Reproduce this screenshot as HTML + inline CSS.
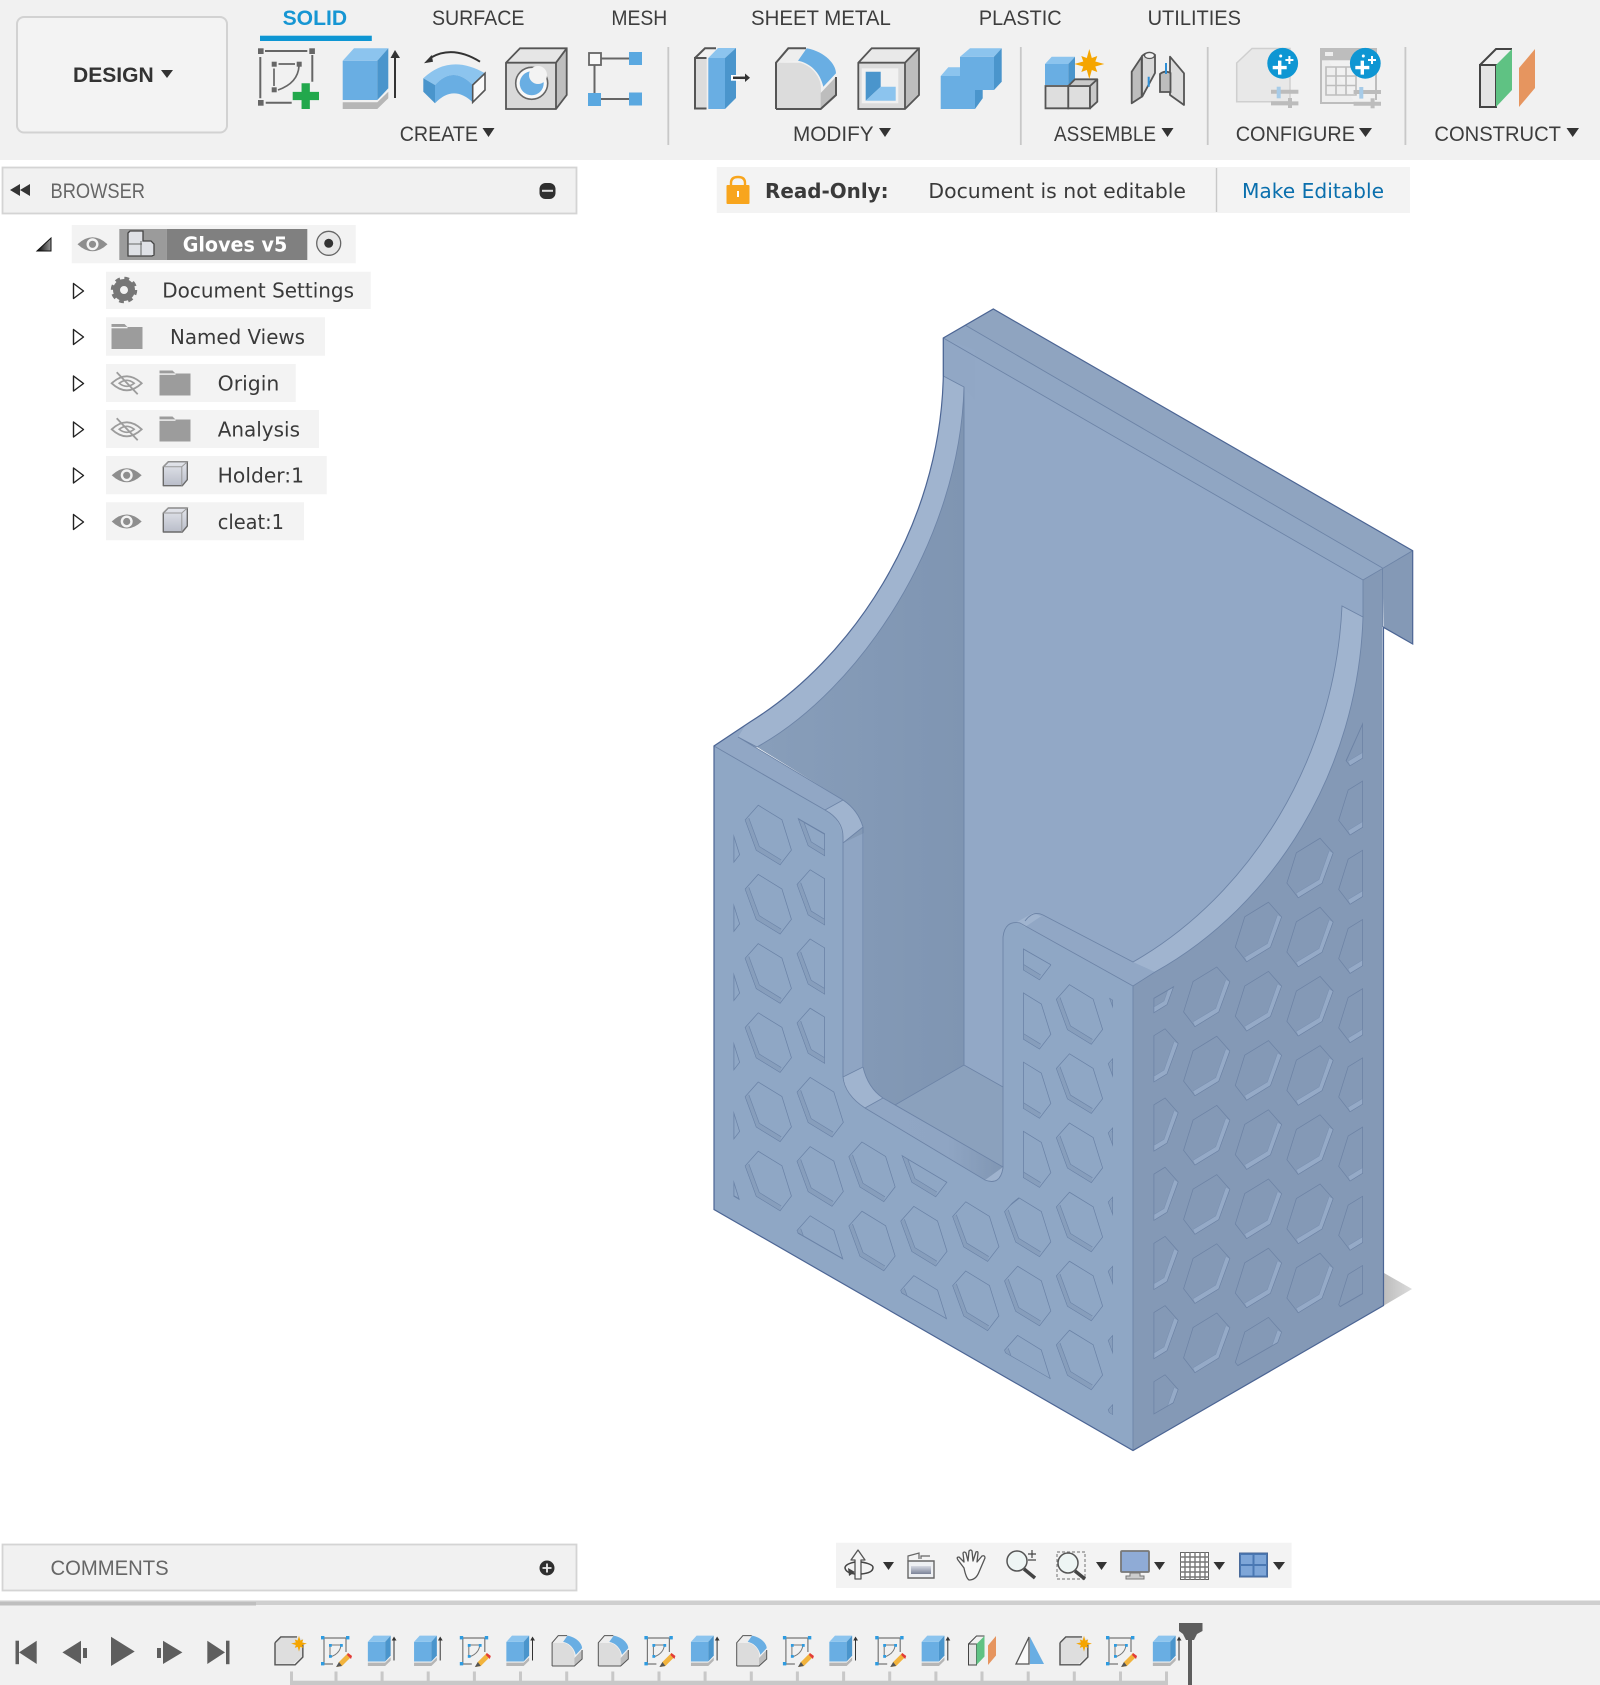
<!DOCTYPE html>
<html><head><meta charset="utf-8"><title>Gloves v5</title>
<style>
html,body{margin:0;padding:0;background:#fff;width:1600px;height:1685px;overflow:hidden}
svg{display:block}
.t{font-family:"Liberation Sans",sans-serif;font-size:21px;fill:#3d3d3d}
.d{font-family:"DejaVu Sans","Liberation Sans",sans-serif;font-size:20px;fill:#3a3a3a}
.b{font-weight:bold}
</style></head><body>
<svg xmlns="http://www.w3.org/2000/svg" width="1600" height="1685" viewBox="0 0 1600 1685">
<defs>
<linearGradient id="wl" x1="0" x2="1" y1="0" y2="0"><stop offset="0" stop-color="#889eba"/><stop offset=".75" stop-color="#8197b4"/><stop offset="1" stop-color="#7f95b2"/></linearGradient>
<linearGradient id="st" x1="0" x2="1" y1="0" y2="0"><stop offset="0" stop-color="#90a6c4"/><stop offset=".6" stop-color="#8fa5c3"/><stop offset="1" stop-color="#8096b3"/></linearGradient>
<linearGradient id="sh" x1="0" x2="1" y1="0" y2="0"><stop offset="0" stop-color="#bdbdbd"/><stop offset="1" stop-color="#dcdcdc"/></linearGradient>
<linearGradient id="tri" x1="0" x2="1" y1="0" y2="0"><stop offset="0" stop-color="#000"/><stop offset="1" stop-color="#999"/></linearGradient>
<linearGradient id="cb" x1="0" x2="0" y1="0" y2="1"><stop offset="0" stop-color="#e4e6ec"/><stop offset="1" stop-color="#b9bdc9"/></linearGradient>
<linearGradient id="cam" x1="0" x2="0" y1="0" y2="1"><stop offset="0" stop-color="#d5d8e2"/><stop offset="1" stop-color="#7b8398"/></linearGradient>
<clipPath id="fc"><polygon points="733.5,781 825,833.5 825,1072 850,1085 850,1120 901.7,1155 946.7,1181.7 1003,1210 1023,1194 1023,948.3 1113,1000 1113,1415 733.5,1196.5"/></clipPath>
<clipPath id="fc2"><polygon points="734.3,782.5 824.2,834.5 824.2,1073 849.2,1086 849.2,1120.5 901.7,1156 946.7,1182.7 1003.5,1211.2 1023.8,1195 1023.8,949.8 1112.2,1000.2 1112.2,1414 734.3,1195.5"/></clipPath>
<clipPath id="rc"><polygon points="1153.5,998 1205,968 1238,910 1262,893 1290,845 1325,830 1345,762 1363,722 1363,1294 1153.5,1414.6"/></clipPath>
<clipPath id="rc2"><polygon points="1154.3,998.6 1205.4,969 1238.5,911 1262.5,894 1290.5,846 1325.7,831 1345.7,763 1362.2,726 1362.2,1293.3 1154.3,1413.2"/></clipPath>
<g id="f"><polygon points="-10,-29.3 13.3,-15 22.7,15 11.7,29.3 -11.7,15 -22.7,-15"/><polygon points="-22.7,-15 -11.7,15 11.7,29.3 13,25 -9,11.5 -19.5,-17" style="fill:var(--w);stroke:none"/><polyline points="-19.5,-17 -9,11.5 13,25" style="fill:none;stroke:var(--l);stroke-width:.7"/></g>
<g id="r"><polygon points="10,-29.3 -13.3,-15 -22.7,15 -11.7,29.3 11.7,15 22.7,-15"/><polygon points="22.7,-15 11.7,15 -11.7,29.3 -13.5,25 9,11.5 19,-17" style="fill:var(--w);stroke:none"/><polyline points="19,-17 9,11.5 -13.5,25" style="fill:none;stroke:var(--l);stroke-width:.6"/></g>
<g id="fg">
<use href="#f" x="716.5" y="839.6"/><use href="#f" x="716.5" y="908.8"/><use href="#f" x="716.5" y="978"/><use href="#f" x="716.5" y="1047.2"/><use href="#f" x="716.5" y="1116.4"/><use href="#f" x="716.5" y="1185.6"/>
<use href="#f" x="768.3" y="835"/><use href="#f" x="768.3" y="904.2"/><use href="#f" x="768.3" y="973.4"/><use href="#f" x="768.3" y="1042.6"/><use href="#f" x="768.3" y="1111.8"/><use href="#f" x="768.3" y="1181"/>
<use href="#f" x="820.2" y="830.4"/><use href="#f" x="820.2" y="899.6"/><use href="#f" x="820.2" y="968.8"/><use href="#f" x="820.2" y="1038"/><use href="#f" x="820.2" y="1107.2"/><use href="#f" x="820.2" y="1176.4"/><use href="#f" x="820.2" y="1245.6"/>
<use href="#f" x="872" y="1171.8"/><use href="#f" x="872" y="1241"/>
<use href="#f" x="923.9" y="1167"/><use href="#f" x="923.9" y="1236.2"/><use href="#f" x="923.9" y="1305.4"/>
<use href="#f" x="975.8" y="1231.6"/><use href="#f" x="975.8" y="1300.8"/>
<use href="#f" x="1027.7" y="950"/><use href="#f" x="1027.7" y="1019.2"/><use href="#f" x="1027.7" y="1088.4"/><use href="#f" x="1027.7" y="1157.6"/><use href="#f" x="1027.7" y="1226.8"/><use href="#f" x="1027.7" y="1296"/><use href="#f" x="1027.7" y="1365.2"/>
<use href="#f" x="1079.5" y="1014.4"/><use href="#f" x="1079.5" y="1083.6"/><use href="#f" x="1079.5" y="1152.8"/><use href="#f" x="1079.5" y="1222"/><use href="#f" x="1079.5" y="1291"/><use href="#f" x="1079.5" y="1360"/>
<use href="#f" x="1131.4" y="1009.6"/><use href="#f" x="1131.4" y="1078.8"/><use href="#f" x="1131.4" y="1148"/><use href="#f" x="1131.4" y="1217.2"/><use href="#f" x="1131.4" y="1286.4"/><use href="#f" x="1131.4" y="1355.6"/><use href="#f" x="1131.4" y="1424.8"/>
</g>
<g id="rg">
<use href="#r" x="1155" y="989.4"/><use href="#r" x="1155" y="1058.6"/><use href="#r" x="1155" y="1127.8"/><use href="#r" x="1155" y="1197"/><use href="#r" x="1155" y="1266.2"/><use href="#r" x="1155" y="1335.4"/><use href="#r" x="1155" y="1404.6"/>
<use href="#r" x="1206.7" y="996.8"/><use href="#r" x="1206.7" y="1066"/><use href="#r" x="1206.7" y="1135.2"/><use href="#r" x="1206.7" y="1204.4"/><use href="#r" x="1206.7" y="1273.6"/><use href="#r" x="1206.7" y="1342.8"/>
<use href="#r" x="1258.4" y="932"/><use href="#r" x="1258.4" y="1001.2"/><use href="#r" x="1258.4" y="1070.4"/><use href="#r" x="1258.4" y="1139.6"/><use href="#r" x="1258.4" y="1208.8"/><use href="#r" x="1258.4" y="1278"/><use href="#r" x="1258.4" y="1347.2"/>
<use href="#r" x="1310" y="868"/><use href="#r" x="1310" y="937"/><use href="#r" x="1310" y="1006.2"/><use href="#r" x="1310" y="1075.4"/><use href="#r" x="1310" y="1144.6"/><use href="#r" x="1310" y="1213.8"/><use href="#r" x="1310" y="1283"/>
<use href="#r" x="1361.8" y="736"/><use href="#r" x="1361.8" y="805.2"/><use href="#r" x="1361.8" y="874.4"/><use href="#r" x="1361.8" y="943.6"/><use href="#r" x="1361.8" y="1012.8"/><use href="#r" x="1361.8" y="1082"/><use href="#r" x="1361.8" y="1151.2"/><use href="#r" x="1361.8" y="1220.4"/><use href="#r" x="1361.8" y="1289.6"/>
</g>
<g id="ext"><polygon points=".7,12.7 35.3,12.7 35.3,52 .7,52" fill="#69aee3"/><polygon points=".7,12.7 12,.3 46.3,.3 35.3,12.7" fill="#8cc4ee"/><polygon points="35.3,12.7 46.3,.3 46.3,40.3 35.3,52" fill="#4a95cc"/><polygon points=".7,54.3 35.3,54.3 46.3,43.7 46.3,50.3 35.3,61 .7,61" fill="#b6b6b6"/><path d="M53,9V50" stroke="#333" stroke-width="2"/><polygon points="48.5,10 53,2 58,10" fill="#333"/></g>
<g id="fil"><path d="M1,61V14.7H25C35,17 45,27 46,39V61Z" fill="#dcdcdc"/><path d="M45.7,45L61,28.7V47L45.7,61Z" fill="#bdbdbd"/><path d="M1,14.7L13.3,.3H31L23,12.7Z" fill="#eeeeee"/><path d="M23,12.7L31.7,.3C51,4 61,17 61,25.3L48.3,38.7C45,24 35,15 23,12.7Z" fill="#69aee3"/><path d="M1,61V14.7L13.3,.3H31M1,61H45.7L61,47V29" fill="none" stroke="#555" stroke-width="2"/></g>
<polygon id="star" points="0,-15 2.5,-6 8,-8 6,-2.5 15,0 6,2.5 8,8 2.5,6 0,15 -2.5,6 -8,8 -6,2.5 -15,0 -6,-2.5 -8,-8 -2.5,-6" fill="#f5a500"/>
<g id="comp"><polygon points="0,14 14,0 58,6 58,42 38,58 0,58" fill="#dedede"/><path d="M0,14L12,2H46M58,18V44L42,60H0V14" fill="none" stroke="#555" stroke-width="3"/><use href="#star" transform="translate(50,16) scale(1.1)"/></g>
<g id="plane"><polygon points="1,17 17,17 17,59 1,59" fill="#e4e4e4" stroke="#444" stroke-width="2"/><path d="M1,17L17,1H33" fill="none" stroke="#444" stroke-width="2"/><polygon points="17,17 33,1 33,42 17,59" fill="#5fc283"/><polygon points="40,20 56,1 56,40 40,59" fill="#e6955f"/></g>
<g id="sk"><path d="M3,2H25M3,2V28M3,28H12M25,2V16" stroke="#777" stroke-width="1.2" fill="none"/><path d="M9,9H20M9,9V21M20,9Q19,18 9,21" stroke="#777" stroke-width="1" fill="none"/><g fill="#2e9be0"><rect x="0" y="0" width="3.4" height="3.4"/><rect x="25" y="0" width="3.4" height="3.4"/><rect x="0" y="26" width="3.4" height="3.4"/><rect x="8" y="8" width="2.8" height="2.8"/><rect x="19" y="8" width="2.8" height="2.8"/><rect x="8" y="19" width="2.8" height="2.8"/></g><polygon points="27,17 31,20 21,30 16,31 18,26" fill="#f2b33c"/><polygon points="27,17 31,20 30,23 26,19" fill="#e23b3b"/><polygon points="18,26 21,30 15,31" fill="#555"/></g>
<g id="eye"><path d="M-15,0Q0,-14 15,0Q0,14 -15,0Z" fill="#8e8e8e"/><circle r="6" fill="#f3f3f3"/><circle r="3.6" fill="#8e8e8e"/></g>
<g id="eyex"><path d="M-15,0Q0,-14 15,0Q0,14 -15,0Z" fill="none" stroke="#9c9c9c" stroke-width="1.8"/><path d="M-7.5,0Q0,-6 7.5,0Q0,6 -7.5,0Z" fill="none" stroke="#9c9c9c" stroke-width="1.6"/><path d="M-10,-11L11,11" stroke="#9c9c9c" stroke-width="1.8"/></g>
<g id="fold"><path d="M0,0H13L16,3H31V25H0Z" fill="#9c9c9c"/><path d="M0,3.6H16" stroke="#f3f3f3" stroke-width="1.4"/></g>
<g id="cube"><path d="M1,6L6,1H25V19L20,25H1Z" fill="url(#cb)" stroke="#6a6a6a" stroke-width="1.4" stroke-linejoin="round"/><path d="M6,1L25,1L19.5,6H1ZM19.5,6V25" fill="none" stroke="#9a9a9a" stroke-width="1"/></g>
<path id="tw" d="M1,1L11,8.5L1,16Z" fill="#fff" stroke="#222" stroke-width="1.4" stroke-linejoin="round"/>
<g id="cfgs"><path d="M-13.7,0H13.7M-13.7,11.7H13.7" stroke="#bcbcbc" stroke-width="4"/><path d="M5.3,6.3V16.3" stroke="#bcbcbc" stroke-width="4"/><path d="M-6,-5V6.6" stroke="#a6cbe8" stroke-width="4"/></g>
<g id="plus"><circle r="15.4" fill="#0e96d3"/><path d="M-10,4.3H4M-3,-2.7V11.3" stroke="#fff" stroke-width="3.4"/><path d="M2.7,-3.3H10.700M6.700,-7.3V.7" stroke="#fff" stroke-width="2"/><circle cx="-2" cy="-7.3" r="1.5" fill="#fff"/></g>
</defs>

<!-- toolbar -->
<rect width="1600" height="160" fill="#f1f1f1"/>
<rect x="17" y="17" width="210" height="115.5" rx="7" fill="#f3f3f3" stroke="#d2d2d2" stroke-width="2"/>
<text class="t b" x="73" y="82" textLength="80.7" lengthAdjust="spacingAndGlyphs" style="fill:#333">DESIGN</text>
<polygon points="161,70 173,70 167,78" fill="#333"/>
<text class="t" x="282.6" y="25" textLength="64.5" lengthAdjust="spacingAndGlyphs" style="fill:#1696d3;font-weight:bold">SOLID</text>
<text class="t" x="432" y="25" textLength="92.4" lengthAdjust="spacingAndGlyphs">SURFACE</text>
<text class="t" x="611.4" y="25" textLength="55.9" lengthAdjust="spacingAndGlyphs">MESH</text>
<text class="t" x="751" y="25" textLength="139.8" lengthAdjust="spacingAndGlyphs">SHEET METAL</text>
<text class="t" x="978.9" y="25" textLength="82.7" lengthAdjust="spacingAndGlyphs">PLASTIC</text>
<text class="t" x="1147.6" y="25" textLength="93.4" lengthAdjust="spacingAndGlyphs">UTILITIES</text>
<rect x="260" y="35.7" width="111.8" height="5.3" fill="#0e96d3"/>
<text class="t" x="399.7" y="141" textLength="78.3" lengthAdjust="spacingAndGlyphs">CREATE</text><polygon points="482.5,128 494.5,128 488.5,137" fill="#333"/>
<text class="t" x="793" y="141" textLength="80.6" lengthAdjust="spacingAndGlyphs">MODIFY</text><polygon points="879,128 891,128 885,137" fill="#333"/>
<text class="t" x="1054" y="141" textLength="102" lengthAdjust="spacingAndGlyphs">ASSEMBLE</text><polygon points="1161.5,128 1173.5,128 1167.5,137" fill="#333"/>
<text class="t" x="1235.7" y="141" textLength="119.3" lengthAdjust="spacingAndGlyphs">CONFIGURE</text><polygon points="1359,128 1372,128 1365.5,137" fill="#333"/>
<text class="t" x="1434.4" y="141" textLength="126.6" lengthAdjust="spacingAndGlyphs">CONSTRUCT</text><polygon points="1566.5,128 1579,128 1572.7,137" fill="#333"/>
<path d="M668.3,47V145M1020.8,47V145M1207.7,47V145M1405.4,47V145" stroke="#c8c8c8" stroke-width="1.8"/>

<!-- sketch -->
<g transform="translate(258,48)">
<path d="M7,3H49.3M2.3,9V50.3M7.7,54.7H33.7M54.3,7V33.7" stroke="#666" stroke-width="2" fill="none"/>
<path d="M20.5,16H37M16,20.5V38M41,18Q40,35 20,42" stroke="#666" stroke-width="1.7" fill="none"/>
<g fill="#666"><rect x="0" y=".3" width="5.6" height="5.7"/><rect x="51.3" y=".3" width="5.6" height="5.7"/><rect x="0" y="52" width="5.6" height="5.7"/><rect x="13.7" y="13.7" width="5" height="5"/><rect x="38.7" y="13.7" width="5" height="5"/><rect x="13.7" y="39.3" width="5" height="5"/></g>
<path d="M47.7,35.3V61M34.7,48H61" stroke="#22a84c" stroke-width="8.3"/>
</g>
<use href="#ext" transform="translate(342,48)"/>
<!-- revolve -->
<path d="M480,61.7Q453,45 431,57.5" fill="none" stroke="#333" stroke-width="2"/><polygon points="424,63.3 431.7,55 433,61.7" fill="#333"/>
<path d="M423.3,78.3Q450,53.3 485,73.3L472.7,85Q453.3,65 435,85Z" fill="#8cc4ee"/>
<path d="M435,85Q453.3,65 472.7,85V102.3Q453.3,84 435,103.3Z" fill="#69aee3"/>
<path d="M423.3,78.3L435,85V103.3L423.3,91.7Z" fill="#4a95cc"/>
<path d="M472.7,85L485,73.3V90L472.7,102.3Z" fill="#fafafa" stroke="#555" stroke-width="1.6"/>
<!-- hole -->
<g>
<polygon points="506,62.7 556,62.7 556,109 506,109" fill="#d9d9d9"/><polygon points="506,62.7 520,48.3 566.7,48.3 556,62.7" fill="#e6e6e6"/><polygon points="556,62.7 566.7,48.3 566.7,95 556,109" fill="#bfbfbf"/>
<path d="M506,62.7L520,48.3H566.7V95L556,109H506ZM506,62.7H556L566.7,48.3M556,62.7V109" fill="none" stroke="#555" stroke-width="1.8"/>
<circle cx="531.7" cy="83.3" r="16" fill="#f8f8f8" stroke="#666" stroke-width="1.6"/>
<circle cx="531.7" cy="83.3" r="12" fill="#69aee3"/>
<circle cx="538" cy="75" r="9" fill="#f3f3f3"/>
</g>
<!-- pattern -->
<g><path d="M601,58.5H629M594.5,65V93M601,99H629" stroke="#666" stroke-width="2"/><rect x="589" y="53" width="12" height="12" fill="#f8f8f8" stroke="#666" stroke-width="1.8"/><rect x="629" y="52" width="13" height="13" fill="#5aa8e0"/><rect x="588" y="93" width="13" height="13" fill="#5aa8e0"/><rect x="629" y="92.5" width="13" height="13" fill="#5aa8e0"/></g>
<!-- press pull -->
<g><polygon points="695,58 706.7,58 706.7,109 695,109" fill="#dcdcdc"/><path d="M706.500,58H695V108.500H706.500M695,58L705,48.300H716" fill="none" stroke="#555" stroke-width="2"/><polygon points="708.300,58 725,58 725,109 708.300,109" fill="#69aee3"/><polygon points="708.300,58 718,48 736,48 725,58" fill="#8cc4ee"/><polygon points="725,58 736,48 736,98 725,109" fill="#4a95cc"/><rect x="731" y="75" width="9" height="5.700" fill="#fff"/><path d="M733,77.800H746" stroke="#333" stroke-width="2.500"/><polygon points="745,73.500 750,77.800 745,82" fill="#333"/></g>
<use href="#fil" transform="translate(775,48)"/>
<!-- shell -->
<g>
<polygon points="858.300,62.700 905,62.700 905,109 858.300,109" fill="#dcdcdc"/><polygon points="858.300,62.700 871.700,48.300 919,48.300 905,62.700" fill="#e9e9e9"/><polygon points="905,62.700 919,48.300 919,95 905,109" fill="#bdbdbd"/>
<path d="M858.300,62.700L871.700,48.300H919V95L905,109H858.300ZM858.300,62.700H905L919,48.300M905,62.700V109" fill="none" stroke="#555" stroke-width="1.800"/>
<rect x="861.700" y="68.300" width="36.600" height="35" fill="#f1f1f1"/><polygon points="865.700,71.700 880.700,71.700 880.700,86.700 865.700,100.700" fill="#4a95cc"/><polygon points="880.700,86.700 895.700,86.700 895.700,100.700 865.700,100.700" fill="#8cc4ee"/>
</g>
<!-- combine -->
<g><path d="M940.700,76H960V56.700H994V90H975V109H940.700Z" fill="#69aee3"/><polygon points="960,56.700 970,48.300 1001.700,48.300 994,56.700" fill="#8cc4ee"/><polygon points="940.700,76 948.300,67.300 960,67.300 960,76" fill="#8cc4ee"/><polygon points="994,56.700 1001.700,48.300 1001.700,81.700 994,90" fill="#4a95cc"/><polygon points="975,90 982.700,90 982.700,98.300 975,109" fill="#4a95cc"/></g>
<!-- assemble -->
<g><polygon points="1045,64 1068.300,64 1068.300,85 1045,85" fill="#69aee3"/><polygon points="1045,64 1051.700,56.700 1075,56.700 1068.300,64" fill="#8cc4ee"/><polygon points="1068.300,64 1075,56.700 1075,78.300 1068.300,85" fill="#4a95cc"/>
<path d="M1045.500,86H1068.300V108.300H1045.500Z" fill="#dedede" stroke="#555" stroke-width="1.800"/><path d="M1068.300,86H1090V108.300H1068.300Z" fill="#dedede" stroke="#555" stroke-width="1.800"/><path d="M1068.300,86L1075,79.300H1097.300L1090,86ZM1090,86L1097.300,79.300V101.700L1090,108.300Z" fill="#c9c9c9" stroke="#555" stroke-width="1.800" stroke-linejoin="round"/>
<use href="#star" transform="translate(1089.300,64)"/></g>
<!-- joint -->
<g><path d="M1131.700,71.700L1141.700,56.700V96.700L1131.700,103.300Z" fill="#bdbdbd" stroke="#555" stroke-width="1.800" stroke-linejoin="round"/><path d="M1142,56Q1149,50 1155,55V73L1142,97Z" fill="#d9d9d9" stroke="#555" stroke-width="1.800"/><ellipse cx="1149.500" cy="55.500" rx="5" ry="3" fill="#f3f3f3" stroke="#555" stroke-width="1.200"/><path d="M1170,56.700L1184,73.300V105L1170,95Z" fill="#dcdcdc" stroke="#555" stroke-width="1.800" stroke-linejoin="round"/><path d="M1160,74Q1165,70 1170.500,73V92H1160Z" fill="#bdbdbd" stroke="#555" stroke-width="1.800"/><path d="M1166,63V74M1148.700,76.700V86.700" stroke="#2e8fd6" stroke-width="2"/></g>
<!-- configure -->
<g><path d="M1236.700,63L1252,48.500H1290V101.700H1236.700Z" fill="#e8e8e8" stroke="#cfcfcf" stroke-width="1.500"/><use href="#plus" transform="translate(1282.700,63.300)"/><use href="#cfgs" transform="translate(1284.700,91.700)"/>
<path d="M1320,49H1376V100" fill="none" stroke="#bdbdbd" stroke-width="2"/><path d="M1321,48.500V103H1355" fill="#eee" stroke="#bdbdbd" stroke-width="2"/><rect x="1320" y="48.300" width="57" height="12" fill="#bdbdbd"/><rect x="1325" y="52" width="8" height="4" fill="#eee"/><path d="M1326,67H1356V95H1326ZM1326,76H1356M1326,85.500H1356M1336,67V95M1346,67V95" fill="none" stroke="#bdbdbd" stroke-width="1.600"/><use href="#plus" transform="translate(1365.300,63.300)"/><use href="#cfgs" transform="translate(1367.300,92)"/></g>
<use href="#plane" transform="translate(1479,48)"/>

<!-- browser panel -->
<rect x="2.500" y="167.500" width="574" height="46" fill="#f1f1f1" stroke="#d4d4d4" stroke-width="1.800"/>
<path d="M10,190L20,184V196ZM20,190L30,184V196Z" fill="#333"/>
<text class="t" x="50.500" y="198" textLength="94.500" lengthAdjust="spacingAndGlyphs" style="fill:#666">BROWSER</text>
<rect x="539.500" y="183" width="16" height="16" rx="6" fill="#2f2f2f"/><rect x="542" y="189.800" width="11" height="2" fill="#ddd"/>

<!-- read-only -->
<rect x="716.700" y="167" width="693.300" height="46" fill="#f3f3f3"/>
<path d="M731,186V183Q731,177 738,177Q745,177 745,183V186" fill="none" stroke="#f8a51d" stroke-width="2.400"/><rect x="726.500" y="185" width="23" height="19" rx="1" fill="#f8a51d"/><rect x="737" y="191" width="2" height="6" fill="#fff"/>
<text class="d b" x="765" y="198" textLength="123.600" lengthAdjust="spacingAndGlyphs">Read-Only:</text>
<text class="d" x="928.400" y="198" textLength="257.600" lengthAdjust="spacingAndGlyphs">Document is not editable</text>
<path d="M1216.500,168V212" stroke="#c8c8c8" stroke-width="1.400"/>
<text class="d" x="1242" y="198" textLength="142" lengthAdjust="spacingAndGlyphs" style="fill:#0a6fad">Make Editable</text>

<!-- tree -->
<rect x="71.700" y="225" width="284" height="38.300" fill="#f3f3f3"/>
<polygon points="37,251 51,238 51,251" fill="url(#tri)" stroke="#111" stroke-width="1"/>
<use href="#eye" transform="translate(92.500,244.300)"/>
<rect x="119.300" y="229" width="47.400" height="31" fill="#9b9b9b"/><rect x="166.700" y="229" width="140.600" height="31" fill="#808080"/>
<path d="M128,233L130,231H143V241H151L154,244V255L152,256H128Z" fill="#dfe1e6" stroke="#444" stroke-width="1.300"/><path d="M128,244H142M141,241V256" stroke="#666" stroke-width="1" fill="none"/>
<text class="d b" x="182.700" y="251.700" textLength="104.600" lengthAdjust="spacingAndGlyphs" style="fill:#fff">Gloves v5</text>
<circle cx="328.700" cy="243.300" r="12" fill="#e8e8e8" stroke="#666" stroke-width="1.300"/><circle cx="328.700" cy="243.300" r="4.500" fill="#333"/>

<g fill="#f3f3f3"><rect x="106" y="271.700" width="264.700" height="37.300"/><rect x="106" y="317.300" width="219" height="38.400"/><rect x="106" y="364" width="189.700" height="38"/><rect x="106" y="410" width="213" height="38"/><rect x="106" y="456" width="220.700" height="38.300"/><rect x="106" y="502.300" width="198" height="38"/></g>
<use href="#tw" transform="translate(72.500,282.500)"/><use href="#tw" transform="translate(72.500,328.500)"/><use href="#tw" transform="translate(72.500,375)"/><use href="#tw" transform="translate(72.500,421)"/><use href="#tw" transform="translate(72.500,467)"/><use href="#tw" transform="translate(72.500,513.500)"/>
<g transform="translate(124,290)"><circle r="7.500" fill="none" stroke="#777" stroke-width="7"/><circle r="11" fill="none" stroke="#777" stroke-width="4.500" stroke-dasharray="4.500 4.140"/></g>
<text class="d" x="162.300" y="297.600" textLength="191.700" lengthAdjust="spacingAndGlyphs">Document Settings</text>
<use href="#fold" transform="translate(111.500,324)"/>
<text class="d" x="170" y="344" textLength="135" lengthAdjust="spacingAndGlyphs">Named Views</text>
<use href="#eyex" transform="translate(126.700,383.300)"/><use href="#fold" transform="translate(159.500,370.500)"/>
<text class="d" x="217.700" y="390.300" textLength="61.600" lengthAdjust="spacingAndGlyphs">Origin</text>
<use href="#eyex" transform="translate(126.700,429.300)"/><use href="#fold" transform="translate(159.500,416.500)"/>
<text class="d" x="217.700" y="436.600" textLength="82.300" lengthAdjust="spacingAndGlyphs">Analysis</text>
<use href="#eye" transform="translate(126.700,475.300)"/><use href="#cube" transform="translate(162.300,460.700)"/>
<text class="d" x="217.700" y="482.700" textLength="86.300" lengthAdjust="spacingAndGlyphs">Holder:1</text>
<use href="#eye" transform="translate(126.700,521.500)"/><use href="#cube" transform="translate(162.300,507)"/>
<text class="d" x="217.700" y="529" textLength="66.300" lengthAdjust="spacingAndGlyphs">cleat:1</text>

<!-- model -->
<polygon points="1384,1273 1412,1289 1384,1305.500" fill="url(#sh)"/>
<path d="M943.300,338L1363,580V1100H964V387Z" fill="#92a8c6"/>
<path d="M943.300,338L993.300,309L1412.700,550.700L1382.500,568L1363,580Z" fill="#90a6c3"/>
<path d="M965,325L993.300,309L1412.700,550.700L1382.500,568Z" fill="#8fa4c0"/>
<path d="M757,747C860,690 960,540 964,387V1065L895,1105L843,1075V800Z" fill="url(#wl)"/>
<path d="M895,1105L964,1065L1003,1087V1170L985,1180Z" fill="#8ba1bd"/>
<path d="M985,1180L1003,1167V1190H985Z" fill="#9fb3ce"/>
<!-- left arc band -->
<path d="M714,746L750,722C850,660 940,530 943.300,376L964,387C960,540 860,690 757,747Z" fill="#a0b4cf"/>
<path d="M943.300,338V376L964,387L975,400V350Z" fill="#91a7c5"/>
<path d="M714,746L745,726L738,737L755,747L843,800L825,810Z" fill="#91a7c5"/>
<!-- slot inner -->
<path d="M843,837V1077L864,1067V833L843,843Z" fill="#8fa5c3"/>
<path d="M865,1108L883,1098L1003,1167L985,1180Z" fill="url(#st)"/>
<!-- front face -->
<path d="M714,746L825,810Q843,820 843,837V1077Q845,1095 865,1108L985,1180Q1000,1186 1003,1168V937Q1005,920 1020,923L1133,986V1450.500L714,1209.500Z" fill="#8fa7c5"/>
<path d="M825,810L843,800Q858,810 863,827L843,843Q843,820 825,810Z" fill="#a0b4cf"/>
<path d="M843,1077L863,1067Q868,1088 883,1098L865,1108Q847,1097 843,1077Z" fill="#a0b4cf"/>
<path d="M1015,923L1033,913L1043,917L1025,927Q1020,923 1015,923Z" fill="#a0b4cf"/>
<path d="M1025,927L1043,915L1133,962L1155,972L1133,986Z" fill="#91a7c5"/>
<!-- right face -->
<path d="M1133,986L1155,972C1275,905 1358,770 1363,617V580L1382.500,568L1383.500,1305.500L1133,1450.500Z" fill="#8499b6"/>
<path d="M1133,962C1250,895 1335,760 1342,606L1363,617C1358,770 1275,905 1155,972Z" fill="#a0b4cf"/>
<polygon points="1382.500,568 1412.700,550.700 1412.700,644 1383.500,627.300" fill="#8499b6"/>
<!-- model lines -->
<g fill="none" stroke="#6d84a7" stroke-width=".9">
<path d="M943.300,338L1363,580L1412.700,550.700M965,325L1382.500,568M1363,580V617L1342,606C1335,760 1250,895 1133,962L1043,915Q1033,910 1025,921M1133,986V1450.500M1382.500,568V627"/>
<path d="M943.300,338V376L964,387V1065L895,1105M964,1065L1003,1087"/>
<path d="M964,387C960,540 860,690 757,747L738,737L843,800Q858,810 863,827V1067Q868,1088 883,1098L1003,1167"/>
<path d="M714,746L825,810Q843,820 843,837V1077Q845,1095 865,1108L985,1180Q1000,1186 1003,1168V937Q1005,920 1020,923L1133,986"/>
<path d="M825,810L843,800M843,843L863,827M843,1077L863,1067M865,1108L883,1098M1363,617C1358,770 1275,905 1155,972L1133,986"/>
</g>
<path d="M714,746V1209.500L1133,1450.500L1383.500,1305.500V627.300L1412.700,644V550.700L993.300,309L943.300,338V376C940,530 850,660 750,722Z" fill="none" stroke="#4c6594" stroke-width="1.200"/>

<!-- pockets: outline layer, then face-coloured interior -->
<g clip-path="url(#fc)"><use href="#fg" fill="#6b83a7" stroke="#6b83a7" stroke-width="1.500" style="--w:none;--l:none"/></g>
<g clip-path="url(#fc2)"><use href="#fg" fill="#8fa7c5" stroke="none" style="--w:#879ebc;--l:#6f87aa"/></g>
<g clip-path="url(#rc)"><use href="#rg" fill="#6d83a5" stroke="#6d83a5" stroke-width="1.500" style="--w:none;--l:none"/></g>
<g clip-path="url(#rc2)"><use href="#rg" fill="#8499b6" stroke="none" style="--w:#95aac7;--l:#7b91b1"/></g>

<!-- comments -->
<rect x="2.500" y="1544.500" width="574" height="46" fill="#f1f1f1" stroke="#d4d4d4" stroke-width="1.800"/>
<text class="t" x="50.500" y="1575" textLength="118.200" lengthAdjust="spacingAndGlyphs" style="fill:#666">COMMENTS</text>
<circle cx="547" cy="1568" r="7.500" fill="#2f2f2f"/><path d="M542.500,1568H551.500M547,1563.500V1572.500" stroke="#eee" stroke-width="1.800"/>

<!-- nav bar -->
<rect x="836" y="1542.700" width="455.600" height="45.300" fill="#f3f3f3"/>
<g fill="#333">
<polygon points="883,1562 894,1562 888.500,1570"/><polygon points="1096,1562 1107,1562 1101.500,1570"/><polygon points="1154,1562 1165,1562 1159.500,1570"/><polygon points="1213.500,1562 1225,1562 1219.300,1570"/><polygon points="1273,1562 1285,1562 1279,1570"/>
</g>
<g>
<path d="M858,1550L865,1560H861V1579H855V1560H851Z" fill="#f4f4f4" stroke="#555" stroke-width="1.300" stroke-linejoin="round"/>
<path d="M855,1562Q845,1564 845,1568Q846,1573 855,1574M861,1574Q873,1573 873,1567.500Q873,1564 861,1562" fill="none" stroke="#444" stroke-width="1.500"/><polygon points="848,1568 855,1572 849,1576" fill="#444"/>
<path d="M908,1561H934V1578H908Z" fill="#eef0f3" stroke="#666" stroke-width="1.400"/><rect x="911" y="1566" width="20" height="8" fill="url(#cam)"/><path d="M908,1561V1556L919,1553V1559M921,1559V1556L930,1556" fill="none" stroke="#666" stroke-width="1.200"/>
<path d="M964,1568L958,1560Q956,1557 959,1557L964,1562L963,1553Q964,1551 966,1553L968,1561L969,1551Q971,1549 972,1551L973,1561L976,1552Q978,1551 978,1553L977,1562L982,1556Q985,1555 985,1558L979,1572Q976,1580 969,1580Q966,1578 964,1568Z" fill="#f8f8f8" stroke="#555" stroke-width="1.300" stroke-linejoin="round"/>
<circle cx="1017" cy="1561" r="10" fill="#eef5f4" stroke="#555" stroke-width="1.500"/><path d="M1024,1569L1035,1578" stroke="#444" stroke-width="3.500"/><path d="M1028,1554H1036M1032,1550V1558M1028,1560H1036" stroke="#444" stroke-width="1.200"/>
<rect x="1057" y="1552" width="28" height="27" fill="none" stroke="#888" stroke-width="1.200" stroke-dasharray="3 2"/><circle cx="1068" cy="1563" r="10" fill="#eef5f4" stroke="#555" stroke-width="1.500"/><path d="M1075,1571L1085,1579" stroke="#444" stroke-width="3.500"/>
<rect x="1121" y="1551" width="28" height="21" rx="1" fill="#8fabd6" stroke="#777" stroke-width="1.800"/><path d="M1130,1573H1140V1576H1144V1579H1126V1576H1130Z" fill="#ccc" stroke="#777"/>
<rect x="1180.500" y="1552.500" width="28" height="27" fill="#fff" stroke="#666" stroke-width="1"/><path d="M1185,1552V1580M1190,1552V1580M1195,1552V1580M1200,1552V1580M1205,1552V1580M1180,1557H1209M1180,1562H1209M1180,1567H1209M1180,1572H1209M1180,1577H1209" stroke="#777" stroke-width="1.400"/>
<rect x="1239.500" y="1553" width="28" height="24" fill="#4a78b3" stroke="#4a6a9a"/><g fill="#7ea6d8"><rect x="1241" y="1555" width="11.500" height="9"/><rect x="1254.500" y="1555" width="11.500" height="9"/><rect x="1241" y="1566" width="11.500" height="9.500"/><rect x="1254.500" y="1566" width="11.500" height="9.500"/></g>
</g>

<!-- timeline -->
<rect x="0" y="1604" width="1600" height="81" fill="#f1f1f1"/>
<rect x="0" y="1600.500" width="1600" height="4.500" fill="#cfcfcf"/><rect x="0" y="1602" width="256" height="3.500" fill="#bfbfbf"/>
<g fill="#5e5e5e">
<rect x="15.500" y="1640.700" width="3.500" height="23.500"/><polygon points="36.700,1640.700 36.700,1664 19,1652.400"/>
<polygon points="62.400,1652.400 81,1640.700 81,1664"/><rect x="83" y="1648" width="4" height="10"/>
<polygon points="111,1636.700 134.700,1651.500 111,1666"/>
<rect x="157" y="1648" width="4" height="10"/><polygon points="163,1640.700 182.400,1652.400 163,1664"/>
<polygon points="207.300,1640.700 225,1652.400 207.300,1664"/><rect x="226" y="1640.700" width="3.500" height="23.500"/>
</g>
<g transform="translate(275,1636) scale(.48)"><use href="#comp"/></g>
<use href="#sk" transform="translate(321,1636)"/>
<use href="#ext" transform="translate(367.500,1635.500) scale(.5)"/>
<use href="#ext" transform="translate(413.700,1635.500) scale(.5)"/>
<use href="#sk" transform="translate(459.800,1636)"/>
<use href="#ext" transform="translate(506,1635.500) scale(.5)"/>
<use href="#fil" transform="translate(551.600,1635.500) scale(.5)"/>
<use href="#fil" transform="translate(597.800,1635.500) scale(.5)"/>
<use href="#sk" transform="translate(644.400,1636)"/>
<use href="#ext" transform="translate(690.600,1635.500) scale(.5)"/>
<use href="#fil" transform="translate(736.200,1635.500) scale(.5)"/>
<use href="#sk" transform="translate(782.900,1636)"/>
<use href="#ext" transform="translate(829,1635.500) scale(.5)"/>
<use href="#sk" transform="translate(875.200,1636)"/>
<use href="#ext" transform="translate(921.300,1635.500) scale(.5)"/>
<use href="#plane" transform="translate(968,1635.500) scale(.5)"/>
<g><polygon points="1029,1637 1029,1664 1016,1664" fill="#fafafa" stroke="#555" stroke-width="1.300"/><polygon points="1030,1637 1044,1664 1030,1664" fill="#69aee3"/></g>
<g transform="translate(1060,1636) scale(.48)"><use href="#comp"/></g>
<use href="#sk" transform="translate(1106,1636)"/>
<use href="#ext" transform="translate(1152.500,1635.500) scale(.5)"/>
<g fill="#c8c8c8">
<rect x="290" y="1680.700" width="878" height="4.300"/>
<rect x="290" y="1671.500" width="3" height="10"/><rect x="334.500" y="1671.500" width="3" height="10"/><rect x="380.600" y="1671.500" width="3" height="10"/><rect x="426.700" y="1671.500" width="3" height="10"/><rect x="472.900" y="1671.500" width="3" height="10"/><rect x="519" y="1671.500" width="3" height="10"/><rect x="565.200" y="1671.500" width="3" height="10"/><rect x="611.300" y="1671.500" width="3" height="10"/><rect x="657.500" y="1671.500" width="3" height="10"/><rect x="703.600" y="1671.500" width="3" height="10"/><rect x="749.800" y="1671.500" width="3" height="10"/><rect x="795.900" y="1671.500" width="3" height="10"/><rect x="842.100" y="1671.500" width="3" height="10"/><rect x="888.200" y="1671.500" width="3" height="10"/><rect x="934.400" y="1671.500" width="3" height="10"/><rect x="980.500" y="1671.500" width="3" height="10"/><rect x="1026.700" y="1671.500" width="3" height="10"/><rect x="1072.800" y="1671.500" width="3" height="10"/><rect x="1119" y="1671.500" width="3" height="10"/><rect x="1165" y="1671.500" width="3" height="10"/>
</g>
<path d="M1179,1623H1202.500V1631L1197,1634L1194,1640H1192V1685H1188V1640H1186L1183,1634L1179,1631Z" fill="#5e5e5e"/>
</svg>
</body></html>
